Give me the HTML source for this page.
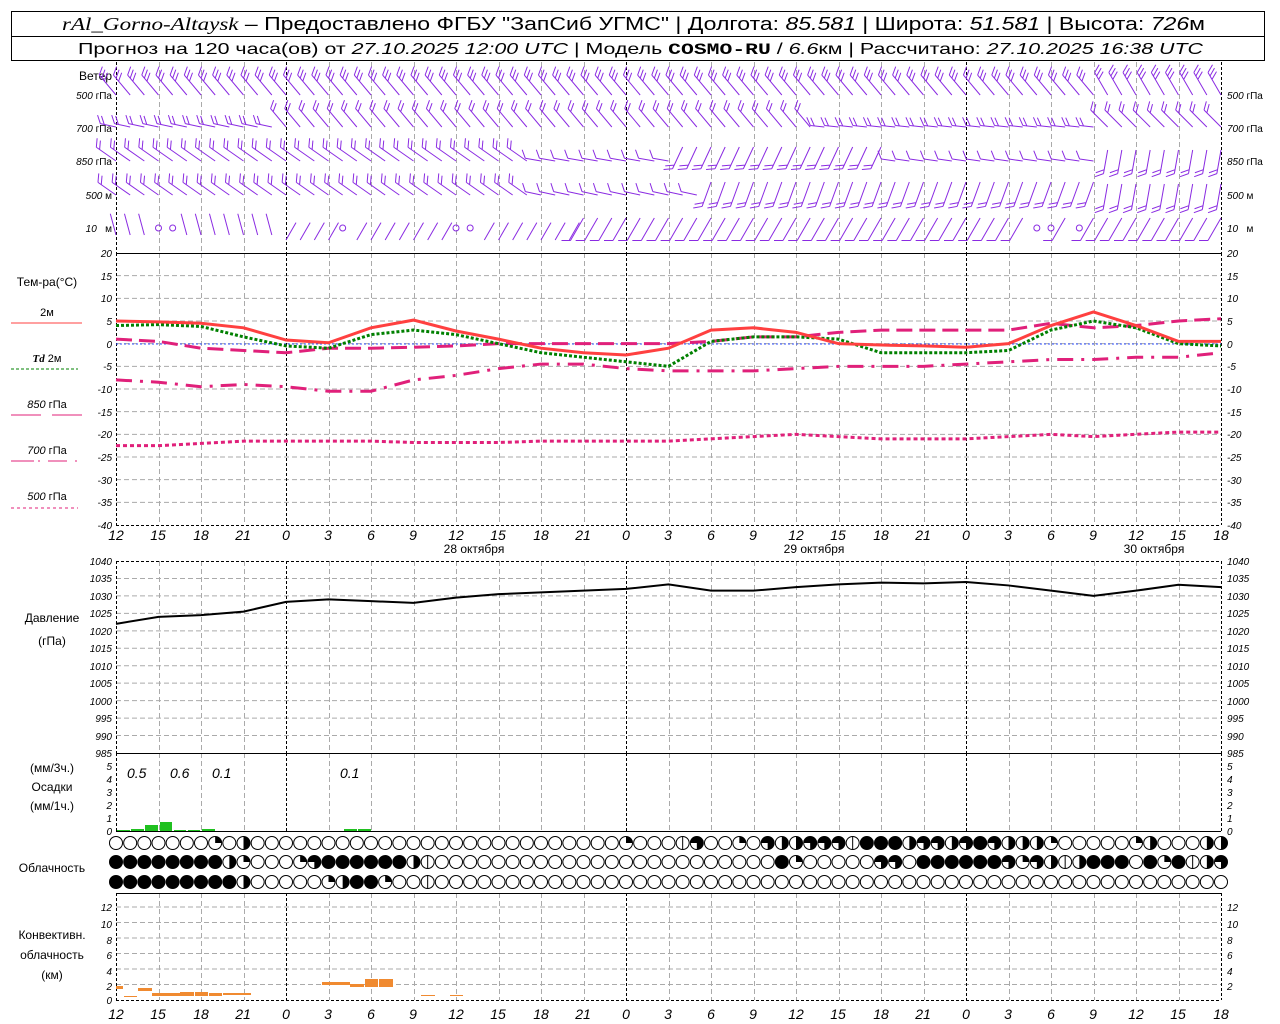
<!DOCTYPE html>
<html><head><meta charset="utf-8"><style>
body{margin:0;background:#fff;}
svg{display:block;font-family:"Liberation Sans",sans-serif;}
.ax{font-family:"Liberation Sans",sans-serif;font-style:italic;font-size:10px;}
.hr{font-family:"Liberation Sans",sans-serif;font-style:italic;font-size:14px;}
.lb{font-size:12px;}
</style></head><body>
<svg id="s" width="1280" height="1024" viewBox="0 0 1280 1024" xmlns="http://www.w3.org/2000/svg">
<rect width="1280" height="1024" fill="#fff"/>
<g id="grid"></g>
<rect x="11.5" y="11.5" width="1253" height="49" fill="none" stroke="#000"/>
<line x1="11" y1="36.5" x2="1265" y2="36.5" stroke="#000"/>
<text x="62" y="30" font-size="18" textLength="1143" lengthAdjust="spacingAndGlyphs"><tspan font-family="Liberation Serif" font-style="italic">rAl_Gorno-Altaysk</tspan> – Предоставлено ФГБУ "ЗапСиб УГМС" | Долгота: <tspan font-style="italic">85.581</tspan> | Широта: <tspan font-style="italic">51.581</tspan> | Высота: <tspan font-style="italic">726</tspan>м</text>
<text x="78" y="54" font-size="16" textLength="1125" lengthAdjust="spacingAndGlyphs">Прогноз на 120 часа(ов) от <tspan font-style="italic">27.10.2025 12:00 UTC</tspan>  | Модель <tspan font-weight="bold" font-family="Liberation Mono">COSMO-RU</tspan> / <tspan font-style="italic">6.6</tspan>км | Рассчитано: <tspan font-style="italic">27.10.2025 16:38 UTC</tspan></text>
<g class="lb" text-anchor="end">
<text x="112" y="80">Ветер</text>
<g class="ax" font-size="11"><text x="112" y="99">500 <tspan font-style="normal">гПа</tspan></text>
<text x="112" y="132">700 <tspan font-style="normal">гПа</tspan></text>
<text x="112" y="165">850 <tspan font-style="normal">гПа</tspan></text>
<text x="112" y="199">500 <tspan font-style="normal">м</tspan></text>
<text x="112" y="232">10 <tspan font-style="normal">&#160; м</tspan></text></g>
</g>
<g class="ax" font-size="11">
<text x="1227" y="99">500 <tspan font-style="normal">гПа</tspan></text>
<text x="1227" y="132">700 <tspan font-style="normal">гПа</tspan></text>
<text x="1227" y="165">850 <tspan font-style="normal">гПа</tspan></text>
<text x="1227" y="199">500 <tspan font-style="normal">м</tspan></text>
<text x="1227" y="232">10 <tspan font-style="normal">&#160; м</tspan></text></g>
<g class="lb" text-anchor="middle">
<text x="47" y="286">Тем-ра(°C)</text>
<text x="47" y="316" font-size="11">2м</text>
<line x1="11" y1="323" x2="82" y2="323" stroke="#ff4040"/>
<text x="47" y="362" font-size="11"><tspan font-family="Liberation Serif" font-style="italic" font-weight="bold">Td</tspan>  2м</text>
<line x1="11" y1="369" x2="78" y2="369" stroke="#008000" stroke-dasharray="3,2"/>
<text x="47" y="408" font-size="11"><tspan font-style="italic">850</tspan> гПа</text>
<path d="M11 415H41M52 415H82" stroke="#e0207a"/>
<text x="47" y="454" font-size="11"><tspan font-style="italic">700</tspan> гПа</text>
<path d="M11 461H34M38 461H40M48 461H67M75 461H77" stroke="#e0207a"/>
<text x="47" y="500" font-size="11"><tspan font-style="italic">500</tspan> гПа</text>
<line x1="11" y1="508" x2="78" y2="508" stroke="#e0207a" stroke-dasharray="3,3"/>
<text x="52" y="622">Давление</text>
<text x="52" y="645">(гПа)</text>
<text x="52" y="772">(мм/3ч.)</text>
<text x="52" y="791">Осадки</text>
<text x="52" y="810">(мм/1ч.)</text>
<text x="52" y="872">Облачность</text>
<text x="52" y="939">Конвективн.</text>
<text x="52" y="959">облачность</text>
<text x="52" y="979">(км)</text>
</g>
<g class="ax" text-anchor="end">
<text x="112" y="257">20</text><text x="112" y="280">15</text><text x="112" y="302">10</text><text x="112" y="325">5</text><text x="112" y="348">0</text><text x="112" y="370">-5</text><text x="112" y="393">-10</text><text x="112" y="416">-15</text><text x="112" y="438">-20</text><text x="112" y="461">-25</text><text x="112" y="484">-30</text><text x="112" y="506">-35</text><text x="112" y="529">-40</text>
<text x="112" y="565">1040</text><text x="112" y="582">1035</text><text x="112" y="600">1030</text><text x="112" y="617">1025</text><text x="112" y="635">1020</text><text x="112" y="652">1015</text><text x="112" y="670">1010</text><text x="112" y="687">1005</text><text x="112" y="705">1000</text><text x="112" y="722">995</text><text x="112" y="740">990</text><text x="112" y="757">985</text>
<text x="112" y="770">5</text><text x="112" y="783">4</text><text x="112" y="796">3</text><text x="112" y="809">2</text><text x="112" y="822">1</text><text x="112" y="835">0</text>
<text x="112" y="911">12</text><text x="112" y="928">10</text><text x="112" y="944">8</text><text x="112" y="959">6</text><text x="112" y="975">4</text><text x="112" y="990">2</text><text x="112" y="1004">0</text>
</g>
<g class="ax">
<text x="1227" y="257">20</text><text x="1227" y="280">15</text><text x="1227" y="302">10</text><text x="1227" y="325">5</text><text x="1227" y="348">0</text><text x="1227" y="370">-5</text><text x="1227" y="393">-10</text><text x="1227" y="416">-15</text><text x="1227" y="438">-20</text><text x="1227" y="461">-25</text><text x="1227" y="484">-30</text><text x="1227" y="506">-35</text><text x="1227" y="529">-40</text>
<text x="1227" y="565">1040</text><text x="1227" y="582">1035</text><text x="1227" y="600">1030</text><text x="1227" y="617">1025</text><text x="1227" y="635">1020</text><text x="1227" y="652">1015</text><text x="1227" y="670">1010</text><text x="1227" y="687">1005</text><text x="1227" y="705">1000</text><text x="1227" y="722">995</text><text x="1227" y="740">990</text><text x="1227" y="757">985</text>
<text x="1227" y="770">5</text><text x="1227" y="783">4</text><text x="1227" y="796">3</text><text x="1227" y="809">2</text><text x="1227" y="822">1</text><text x="1227" y="835">0</text>
<text x="1227" y="911">12</text><text x="1227" y="928">10</text><text x="1227" y="944">8</text><text x="1227" y="959">6</text><text x="1227" y="975">4</text><text x="1227" y="990">2</text>
</g>
<g class="hr" text-anchor="middle">
<g transform="translate(0,540)">
<text x="116">12</text><text x="158">15</text><text x="201">18</text><text x="243">21</text><text x="286">0</text><text x="328">3</text><text x="371">6</text><text x="413">9</text><text x="456">12</text><text x="498">15</text><text x="541">18</text><text x="583">21</text><text x="626">0</text><text x="668">3</text><text x="711">6</text><text x="753">9</text><text x="796">12</text><text x="838">15</text><text x="881">18</text><text x="923">21</text><text x="966">0</text><text x="1008">3</text><text x="1051">6</text><text x="1093">9</text><text x="1136">12</text><text x="1178">15</text><text x="1221">18</text>
</g>
<g transform="translate(0,1019)">
<text x="116">12</text><text x="158">15</text><text x="201">18</text><text x="243">21</text><text x="286">0</text><text x="328">3</text><text x="371">6</text><text x="413">9</text><text x="456">12</text><text x="498">15</text><text x="541">18</text><text x="583">21</text><text x="626">0</text><text x="668">3</text><text x="711">6</text><text x="753">9</text><text x="796">12</text><text x="838">15</text><text x="881">18</text><text x="923">21</text><text x="966">0</text><text x="1008">3</text><text x="1051">6</text><text x="1093">9</text><text x="1136">12</text><text x="1178">15</text><text x="1221">18</text>
</g>
</g>
<g class="lb" text-anchor="middle" font-size="13">
<text x="474" y="553">28 октября</text><text x="814" y="553">29 октября</text><text x="1154" y="553">30 октября</text>
</g>
<g fill="#20c020">
<rect x="117" y="830" width="13" height="1"/><rect x="131" y="829" width="13" height="2"/><rect x="145" y="825" width="13" height="6"/><rect x="160" y="822" width="12" height="9"/><rect x="174" y="830" width="12" height="1"/><rect x="188" y="830" width="12" height="1"/><rect x="202" y="829" width="13" height="2"/><rect x="344" y="829" width="13" height="2"/><rect x="358" y="829" width="13" height="2"/>
</g>
<g class="hr" font-size="13"><text x="127" y="778">0.5</text><text x="170" y="778">0.6</text><text x="212" y="778">0.1</text><text x="340" y="778">0.1</text></g>
<g fill="#f08a30">
<rect x="116" y="986" width="7" height="3"/><rect x="124" y="996" width="13" height="1"/><rect x="138" y="988" width="14" height="3"/><rect x="152" y="993" width="28" height="3"/><rect x="180" y="992" width="14" height="4"/><rect x="195" y="992" width="13" height="4"/><rect x="209" y="993" width="13" height="3"/><rect x="223" y="993" width="28" height="2"/><rect x="322" y="982" width="28" height="3"/><rect x="350" y="984" width="14" height="3"/><rect x="365" y="979" width="13" height="8"/><rect x="379" y="979" width="14" height="8"/><rect x="421" y="995" width="14" height="1"/><rect x="450" y="995" width="13" height="1"/>
</g>
<g id="dyn"></g>
</svg>
<script>
const NS="http://www.w3.org/2000/svg";
const g=document.getElementById('grid'),d=document.getElementById('dyn');
function el(p,t,a){const e=document.createElementNS(NS,t);for(const k in a)e.setAttribute(k,a[k]);p.appendChild(e);return e;}
const hx=h=>116+h*1105/78;
const panels=[[62,253],[253,525],[561,753],[753,831],[893,1000]];
const gl=(y)=>el(g,'line',{x1:116,x2:1221,y1:y,y2:y,stroke:'#aaa','stroke-dasharray':'5,3'});
for(let v=15;v>=-35;v-=5)gl(253+(20-v)*272/60);
for(let p=1035;p>=990;p-=5)gl(561+(1040-p)*192/55);
for(let k=2;k<=12;k+=2)gl(1000-k*93/12);
for(let h=0;h<=78;h+=3){const x=Math.round(hx(h))+.5;const blk=(h==0||h==78||(h-12)%24==0);
 panels.forEach(p=>el(g,'line',{x1:x,x2:x,y1:p[0],y2:p[1],stroke:blk?'#000':'#aaa','stroke-dasharray':blk?'3,2':'5,3'}));}
el(g,'line',{x1:116,x2:1221,y1:253.5,y2:253.5,stroke:'#000'});
el(g,'line',{x1:116,x2:1221,y1:525.5,y2:525.5,stroke:'#000','stroke-dasharray':'3,2'});
el(g,'line',{x1:116,x2:1221,y1:561.5,y2:561.5,stroke:'#000','stroke-dasharray':'3,2'});
el(g,'line',{x1:116,x2:1221,y1:753.5,y2:753.5,stroke:'#000'});
el(g,'line',{x1:116,x2:1221,y1:831.5,y2:831.5,stroke:'#000'});
el(g,'line',{x1:116,x2:1221,y1:893.5,y2:893.5,stroke:'#000'});
el(g,'line',{x1:116,x2:1221,y1:1000.5,y2:1000.5,stroke:'#000','stroke-dasharray':'3,2'});
el(g,'line',{x1:116,x2:1221,y1:344,y2:344,stroke:'#3050ff','stroke-dasharray':'2,2'});
const ty=v=>253+(20-v)*272/60;
function pl(arr,f,st){el(d,'polyline',Object.assign({points:arr.map((v,i)=>hx(i*3)+','+f(v)).join(' '),fill:'none'},st));}
const T2=[5,4.8,4.5,3.5,0.8,0.2,3.5,5.2,2.8,1,-1,-2,-2.5,-1,3,3.5,2.5,0,-0.3,-0.5,-0.8,0,4,7,4,0.5,0.5];
const TD=[4,4.2,3.8,1.5,-0.5,-1,2,3,2,0,-2,-3,-4,-5,0.5,1.5,1.5,1,-2,-2,-2,-1.5,3,5,3.5,0,-0.5];
const P850=[1,0.5,-1,-1.5,-2,-1,-1,-0.8,-0.5,0,0,0,0,0,0.5,1.5,1.5,2.5,3,3,3,3,4.5,3.5,4,5,5.5];
const P700=[-8,-8.5,-9.5,-9,-9.5,-10.5,-10.5,-8,-7,-5.5,-4.5,-4.5,-5.5,-6,-6,-6,-5.5,-5,-5,-5,-4.5,-4,-3.5,-3.5,-3,-3,-2];
const P500=[-22.5,-22.5,-22,-21.5,-21.5,-21.5,-21.5,-21.8,-21.8,-21.8,-21.5,-21.5,-21.5,-21.5,-21,-20.5,-20,-20.5,-21,-21,-21,-20.5,-20,-20.5,-20,-19.5,-19.5];
pl(P500,ty,{stroke:'#e0207a','stroke-width':3,'stroke-dasharray':'4,3'});
pl(P700,ty,{stroke:'#e0207a','stroke-width':3,'stroke-dasharray':'16,8,3,8'});
pl(P850,ty,{stroke:'#e0207a','stroke-width':3,'stroke-dasharray':'16,7'});
pl(TD,ty,{stroke:'#008000','stroke-width':3,'stroke-dasharray':'3,2'});
pl(T2,ty,{stroke:'#ff4040','stroke-width':3});
const PR=[1022,1024,1024.5,1025.5,1028.3,1029,1028.5,1028,1029.5,1030.5,1031,1031.5,1032,1033.3,1031.5,1031.5,1032.5,1033.3,1033.8,1033.6,1034,1033,1031.5,1030,1031.5,1033.2,1032.5];
pl(PR,p=>561+(1040-p)*192/55,{stroke:'#000','stroke-width':2});
const wc='#8a2be2';
function barb(x,y,a,n,L){const r=a*Math.PI/180,dx=Math.sin(r),dy=-Math.cos(r);const tx=x+L*dx,ty2=y+L*dy;
 let s='M'+x+' '+y+'L'+tx+' '+ty2;const rb=(a+60)*Math.PI/180;
 for(let k=0;k<n;k++){const px=tx-k*4*dx,py=ty2-k*4*dy;s+='M'+px+' '+py+'l'+9*Math.sin(rb)+' '+(-9*Math.cos(rb));}
 el(d,'path',{d:s,stroke:wc,fill:'none','stroke-width':1});}
for(let h=0;h<=78;h++){const x=hx(h);
 barb(x,95,h<70?-40:-30,3,26);
 if(h<12)barb(x,127,-78,2,16);else if(h<50)barb(x,127,-40,2,24);else if(h<70)barb(x,127,-84,2,14);else barb(x,127,-45,2,24);
 if(h<30)barb(x,161,-55,2,24);else if(h<40)barb(x,161,-80,1,16);else if(h<55)barb(x,147,205,2,24);else if(h<70)barb(x,161,-82,1,14);else barb(x,150,190,2,24);
 if(h<30)barb(x,195,-55,2,22);else if(h<42)barb(x,195,-78,1,16);else if(h<70)barb(x,182,200,2,26);else barb(x,184,190,2,26);
 if([3,4,16,24,25,65,66,68].includes(h)){el(d,'circle',{cx:x,cy:228,r:3,fill:'none',stroke:wc});}
 else if(h<12)barb(x,235,-15,0,22);else if(h<33)barb(x,240,30,0,20);else barb(x,218,210,1,26);
}
const rows=[
{7:'q',9:'h',36:'q',40:'v',41:'t',44:'q',46:'t',47:'h',48:'h',49:'t',50:'t',51:'t',52:'v',53:'f',54:'f',55:'f',56:'h',57:'t',58:'t',59:'h',60:'t',61:'f',62:'t',63:'h',64:'h',65:'h',66:'q',72:'q',73:'h',77:'h',78:'h'},
{8:'h',9:'q',13:'q',14:'t',15:'f',16:'f',17:'f',18:'f',19:'f',20:'f',21:'h',22:'v',47:'f',48:'q',54:'t',55:'t',57:'f',58:'f',59:'f',60:'f',61:'f',62:'f',63:'t',64:'q',65:'t',66:'h',67:'v',68:'h',69:'f',70:'f',71:'f',73:'f',74:'q',75:'f',76:'v',77:'h',78:'t'},
{9:'h',15:'q',16:'h',17:'f',18:'f',19:'q',22:'v'}];
for(let i=0;i<=7;i++)rows[1][i]='f';for(let i=0;i<=8;i++)rows[2][i]='f';
const cy=[843,862,882],R=6.5;
rows.forEach((row,ri)=>{for(let h=0;h<=78;h++){const x=hx(h),y=cy[ri],s=row[h]||'0';
 el(d,'circle',{cx:x,cy:y,r:R,fill:s=='f'?'#000':'#fff',stroke:'#000'});
 if(s=='q')el(d,'path',{d:`M${x} ${y}V${y-R}A${R} ${R} 0 0 1 ${x+R} ${y}Z`,fill:'#000'});
 if(s=='h')el(d,'path',{d:`M${x} ${y-R}A${R} ${R} 0 0 1 ${x} ${y+R}Z`,fill:'#000'});
 if(s=='t')el(d,'path',{d:`M${x} ${y}H${x-R}A${R} ${R} 0 1 1 ${x} ${y+R}Z`,fill:'#000'});
 if(s=='v')el(d,'line',{x1:x,x2:x,y1:y-R,y2:y+R,stroke:'#000'});
}});
</script>
</body></html>
